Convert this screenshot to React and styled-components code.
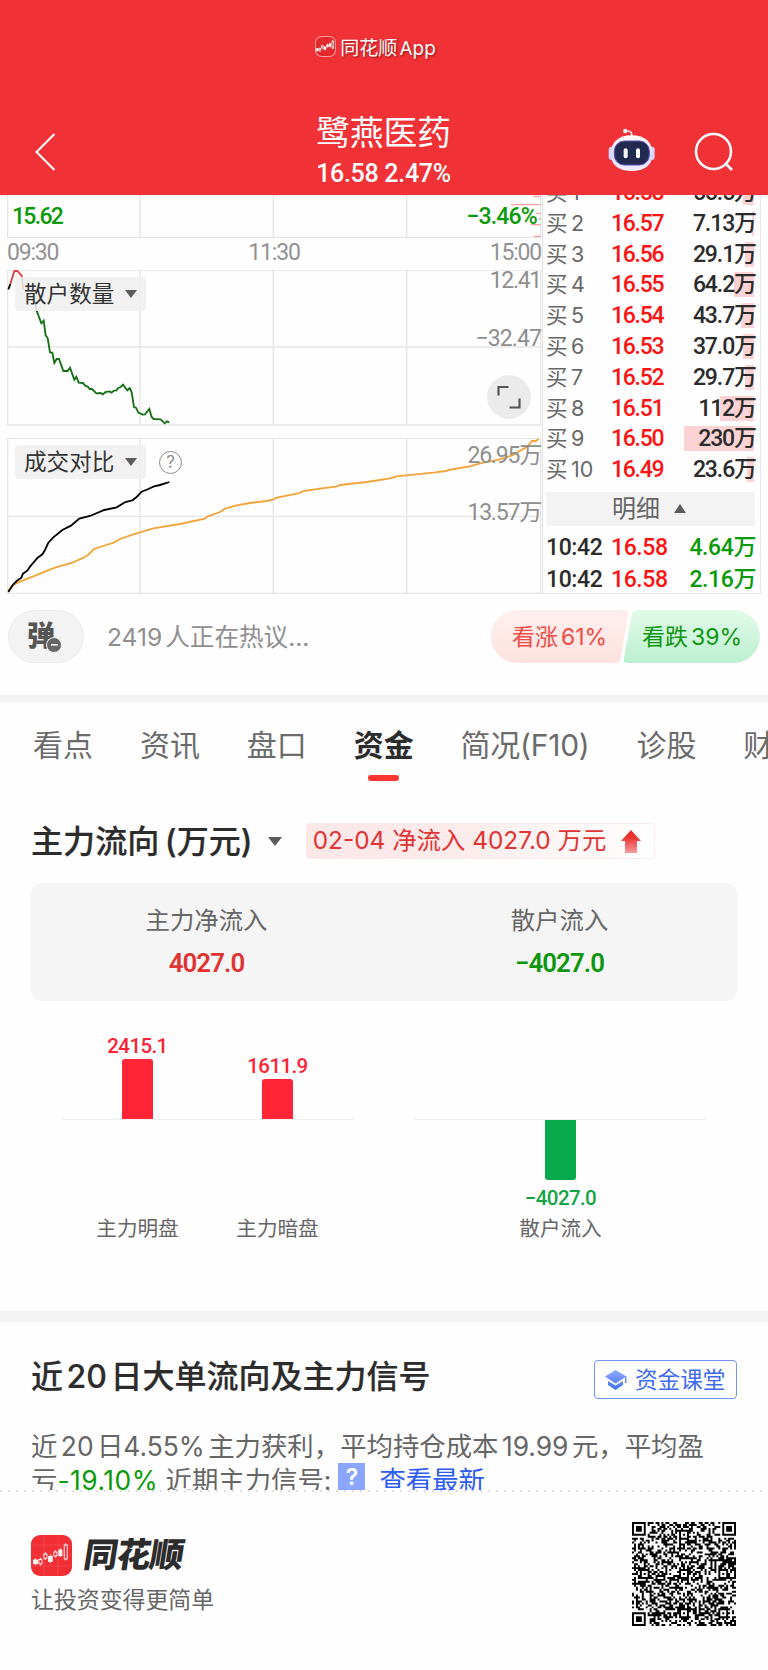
import React from "react";
import styled, { createGlobalStyle } from "styled-components";

const GlobalStyle = createGlobalStyle`
  * {
    box-sizing: border-box;
  }
  body {
    margin: 0;
    background: #fefefe;
    font-family: Inter, "Noto Sans CJK SC", sans-serif;
    color: #303030;
  }
  svg {
    display: block;
  }
`;

const din = `Roboto, "Noto Sans CJK SC", sans-serif`;

const Page = styled.div`
  width: 768px;
  height: 1670px;
  overflow: hidden;
  display: flex;
  flex-direction: column;
  white-space: nowrap;
`;

/* ---------- header ---------- */

const Header = styled.header`
  height: 195px;
  flex: none;
  background: #f03136;
  color: #fff;
`;

const Brand = styled.div`
  height: 97px;
  padding: 0 17px 4px 0;
  display: flex;
  align-items: center;
  justify-content: center;
  gap: 4px;
  font-size: 19px;
  word-spacing: -3px;
  text-shadow: 1px 1px 2px rgba(90, 0, 0, 0.6);
`;

const NavBar = styled.div`
  height: 98px;
  display: grid;
  grid-template-columns: 1fr 160px 1fr;
  padding: 0 35px 0 34px;
`;

const NavLeft = styled.div`
  padding-top: 35px;
`;

const NavRight = styled.div`
  display: flex;
  justify-content: flex-end;
  gap: 38px;
  padding-top: 31px;
`;

const StockTitle = styled.div`
  display: flex;
  flex-direction: column;
  align-items: center;
`;

const StockName = styled.div`
  height: 58px;
  margin-top: 7px;
  line-height: 58px;
  font-size: 33.8px;
`;

const StockPrice = styled.div`
  font-family: ${din};
  font-weight: 500;
  font-size: 25px;
  line-height: 24px;
  letter-spacing: -0.3px;
`;

/* ---------- quote area ---------- */

const Quote = styled.section`
  flex: none;
  height: 399px;
  display: flex;
  padding-left: 7px;
`;

const Charts = styled.div`
  width: 535px;
  display: flex;
  flex-direction: column;
`;

const ChartBox = styled.div`
  position: relative;
  height: ${(p) => p.$height}px;
`;

const AxisText = styled.span`
  position: absolute;
  top: ${(p) => p.$top}px;
  ${(p) => (p.$left ? `left: ${p.$left}px` : `right: ${p.$right || 1}px`)};
  font-family: ${din};
  font-size: 23px;
  line-height: 24px;
  font-weight: ${(p) => (p.$color ? 500 : 400)};
  letter-spacing: ${(p) => p.$spacing || -1}px;
  color: ${(p) => p.$color || "#8e8e8e"};
`;

const TimeRow = styled.div`
  height: 32px;
  display: flex;
  justify-content: space-between;
  padding-right: 1px;
  font-family: ${din};
  font-size: 23px;
  line-height: 30px;
  letter-spacing: -1.2px;
  color: #929292;
`;

const Picker = styled.div`
  position: absolute;
  left: 8px;
  top: ${(p) => p.$top}px;
  width: 131px;
  height: 34px;
  padding: 0 0 0 9px;
  display: flex;
  align-items: center;
  gap: 11px;
  border-radius: 4px;
  background: rgba(238, 238, 238, 0.85);
  font-size: 22.6px;
  line-height: 34px;
  color: #333;
`;

const Caret = styled.i`
  width: 0;
  height: 0;
  border: ${(p) => p.$w || 6}px solid transparent;
  border-bottom-width: 0;
  border-top: ${(p) => p.$h || 8.5}px solid #5c5c5c;
  transform: ${(p) => (p.$up ? "rotate(180deg)" : "none")};
`;

const Help = styled.div`
  position: absolute;
  left: 152px;
  top: 13px;
  width: 23px;
  height: 23px;
  border: 1.6px solid #8d8d8d;
  border-radius: 50%;
  font-size: 17px;
  line-height: 20px;
  text-align: center;
  color: #8a8a8a;
`;

const Expand = styled.div`
  position: absolute;
  left: 480px;
  top: 105px;
  width: 44px;
  height: 44px;
  padding: 10px;
  border-radius: 50%;
  background: #ebebeb;
`;

const OrderBook = styled.div`
  width: 219px;
  overflow: hidden;
  border-right: 1.5px solid #e8e8e8;
  border-left: 1.5px solid #e3e3e3;
  border-bottom: 1.5px solid #e8e8e8;
  padding: 0 4px 0 3px;
`;

const BookList = styled.div`
  margin-top: -18px;
`;

const BookRow = styled.div`
  position: relative;
  height: 30.8px;
  display: grid;
  grid-template-columns: 65px 60px 1fr;
  font-family: ${din};
  font-size: 23px;
  line-height: 31px;
  font-weight: 500;
  letter-spacing: -1.3px;
`;

const VolumeBar = styled.i`
  position: absolute;
  right: 2px;
  top: 3px;
  height: 25px;
  width: ${(p) => p.$width}px;
  background: #fbd3d5;
`;

const Level = styled.span`
  font-family: Inter, "Noto Sans CJK SC", sans-serif;
  font-weight: 400;
  font-size: 21.5px;
  letter-spacing: 0;
  word-spacing: -2.5px;
  color: #686868;
`;

const Price = styled.span`
  color: #fb1414;
`;

const Volume = styled.span`
  position: relative;
  text-align: right;
  letter-spacing: -1.1px;
  color: ${(p) => p.$color || "#2b2b2b"};
`;

const DetailBar = styled.div`
  height: 34px;
  width: 209px;
  margin: 7px 0 4px;
  padding-right: 3px;
  display: flex;
  align-items: center;
  justify-content: center;
  gap: 14px;
  background: #f3f3f3;
  font-size: 24px;
  line-height: 32px;
  color: #666;
`;

const TradeRow = styled(BookRow)`
  height: 32.3px;
  line-height: 35px;
  letter-spacing: -0.4px;
  color: #2b2b2b;

  ${Volume} {
    letter-spacing: -0.4px;
  }
`;

/* ---------- discussion ---------- */

const Discussion = styled.section`
  flex: none;
  height: 101px;
  display: flex;
  align-items: flex-start;
  padding: 16px 8px 0;
`;

const DanmuPill = styled.div`
  width: 76px;
  height: 53px;
  position: relative;
  border: 1.5px solid #ebebeb;
  border-radius: 27px;
  background: #f3f3f3;
  padding-left: 18px;
  font-size: 28px;
  line-height: 50px;
  font-weight: 900;
  color: #555;
`;

const MinusBadge = styled.i`
  position: absolute;
  left: 37px;
  top: 26px;
  width: 16px;
  height: 16px;
  border: 1.5px solid #f3f3f3;
  border-radius: 50%;
  background: linear-gradient(#fff, #fff) center / 7px 1.6px no-repeat, #666;
`;

const Talking = styled.div`
  flex: 1;
  padding-left: 23px;
  font-size: 24.6px;
  line-height: 55px;
  word-spacing: -4px;
  color: #8f8f8f;
`;

const Vote = styled.div`
  position: relative;
  width: 269px;
  height: 53px;
  display: flex;
`;

const VoteShape = styled.svg`
  position: absolute;
  inset: 0;
`;

const VoteText = styled.span`
  position: relative;
  padding-left: 21px;
  width: ${(p) => p.$width}px;
  font-size: 23px;
  line-height: 54px;
  word-spacing: -3.5px;
  color: ${(p) => p.$color};
`;

const Divider = styled.div`
  flex: none;
  height: ${(p) => p.$height}px;
  background: #f3f3f3;
`;

/* ---------- tabs ---------- */

const Tabs = styled.nav`
  flex: none;
  height: 78px;
  display: flex;
  gap: 46.9px;
  padding-left: 33px;
  overflow: hidden;
`;

const Tab = styled.div`
  flex: none;
  display: flex;
  flex-direction: column;
  align-items: center;
  font-size: 30px;
  line-height: 84px;
  color: ${(p) => (p.$active ? "#2c2c2c" : "#6b6b6b")};
  font-weight: ${(p) => (p.$active ? 700 : 400)};
  letter-spacing: ${(p) => p.$spacing || 0}px;

  &::after {
    content: "";
    margin-top: -12px;
    width: 31px;
    height: 6px;
    flex: none;
    border-radius: 3px;
    background: ${(p) => (p.$active ? "#fb352f" : "transparent")};
  }
`;

/* ---------- capital flow ---------- */

const Flow = styled.section`
  flex: none;
  height: 530px;
  padding: 42px 31px 0;
`;

const FlowHead = styled.div`
  display: flex;
  align-items: center;
  height: 36px;
`;

const FlowTitle = styled.h2`
  margin: -4px 15px 0 0;
  font-size: 32.1px;
  font-weight: 500;
  -webkit-text-stroke: 0.2px #2c2c2c;
  word-spacing: -3px;
  color: #2c2c2c;
`;

const FlowBadge = styled.div`
  margin-left: 24px;
  width: 349px;
  height: 36px;
  display: flex;
  align-items: center;
  padding-left: 6px;
  gap: 15px;
  border: 1px solid #fdeaea;
  border-radius: 3px;
  background: linear-gradient(90deg, #fde8e8, #fdeaea 40%, #fff);
  font-size: 24.4px;
  color: #e03333;
`;

const BadgeText = styled.span`
  margin-top: -5px;
`;

const Summary = styled.div`
  margin-top: 24px;
  height: 118px;
  display: grid;
  grid-template-columns: 1fr 1fr;
  border-radius: 10px;
  background: #f5f5f5;
`;

const SummaryCell = styled.div`
  text-align: center;
  padding: 19px 2px 0 0;
  font-size: 24.4px;
  line-height: 36px;
  color: #666;
`;

const SummaryValue = styled.div`
  margin-top: 8px;
  font-family: ${din};
  font-size: 25.8px;
  line-height: 34px;
  letter-spacing: -0.9px;
  font-weight: 600;
  color: ${(p) => p.$color};
`;

const BarArea = styled.div`
  display: flex;
  justify-content: space-between;
  height: 230px;
  padding: 0 31px;
  margin-top: 16px;
`;

const BarPanel = styled.div`
  width: 292px;
  display: flex;
  justify-content: center;
  gap: 49px;
  height: 103px;
  padding: ${(p) => (p.$right ? "0 0 0 1px" : "0 1px 0 0")};
  border-bottom: 1.5px solid #f1f1f1;
`;

const BarColumn = styled.div`
  width: 91px;
  height: 231px;
  display: grid;
  grid-template-rows: 102px 93px 34px;
  row-gap: 1px;
  justify-items: center;
  color: ${(p) => (p.$down ? "#13a545" : "#fb2436")};
`;

const BarHalf = styled.div`
  display: flex;
  flex-direction: column;
  align-items: center;
  justify-content: ${(p) => (p.$down ? "flex-start" : "flex-end")};
`;

const BarValue = styled.span`
  font-family: ${din};
  font-size: 20.5px;
  font-weight: 500;
  line-height: 26px;
  letter-spacing: -0.6px;
  margin: ${(p) => (p.$down ? "5px 0 0" : "0")};
`;

const Bar = styled.i`
  flex: none;
  width: 31px;
  background: ${(p) => (p.$down ? "#06a94b" : "#ff2436")};
  border-radius: ${(p) => (p.$down ? "0 0 3px 3px" : "3px 3px 0 0")};
`;

const BarLabel = styled.span`
  font-size: 20.6px;
  line-height: 30px;
  color: #666;
`;

/* ---------- signals ---------- */

const Signals = styled.section`
  flex: none;
  height: 168px;
  padding: 38px 31px 0;
  overflow: hidden;
`;

const SignalHead = styled.div`
  height: 39px;
  display: flex;
  justify-content: space-between;
`;

const SignalTitle = styled.h2`
  margin: -4px 0 0;
  font-size: 32px;
  line-height: 42px;
  font-weight: 500;
  -webkit-text-stroke: 0.2px #2c2c2c;
  word-spacing: -5px;
  color: #2c2c2c;
`;

const ClassButton = styled.div`
  width: 143px;
  height: 39px;
  display: flex;
  align-items: center;
  gap: 7px;
  padding-left: 9px;
  border: 1.5px solid #6f92fb;
  border-radius: 4px;
  font-size: 22.6px;
  line-height: 34px;
  color: #3f69f0;
`;

const SignalText = styled.p`
  margin: 30px 0 0;
  font-size: 26.4px;
  line-height: 34px;
  word-spacing: -4px;
  color: #666;
`;

const Loss = styled.span`
  margin-right: 4px;
  letter-spacing: 0.5px;
  color: #0a9a0a;
`;

const Latest = styled.span`
  margin-left: 14px;
  color: #2d5cf0;
`;

const Question = styled.span`
  display: inline-block;
  width: 27px;
  height: 28px;
  margin-left: 7px;
  vertical-align: top;
  background: #8aa6ff;
  color: #fff;
  font-size: 23px;
  font-weight: 600;
  line-height: 28px;
  text-align: center;
`;

/* ---------- footer ---------- */

const Footer = styled.footer`
  flex: 1;
  display: flex;
  justify-content: space-between;
  padding: 32px 32px 0 31px;
  background: repeating-linear-gradient(90deg, #dedede 0 2px, transparent 2px 8px) top / 100% 2px no-repeat;
`;

const LogoRow = styled.div`
  display: flex;
  gap: 12px;
  padding-top: 13px;
`;

const LogoText = styled.span`
  font-size: 34px;
  line-height: 39px;
  font-weight: 900;
  letter-spacing: -1px;
  transform: skewX(-9deg);
  color: #2c2c2c;
`;

const Slogan = styled.div`
  margin-top: 7px;
  font-size: 22.9px;
  line-height: 34px;
  color: #666;
`;

const rows = [
  ["1", "16.58", "55.5万", 11],
  ["2", "16.57", "7.13万", 2],
  ["3", "16.56", "29.1万", 9],
  ["4", "16.55", "64.2万", 20],
  ["5", "16.54", "43.7万", 13.5],
  ["6", "16.53", "37.0万", 11.5],
  ["7", "16.52", "29.7万", 9],
  ["8", "16.51", "112万", 34],
  ["9", "16.50", "230万", 70],
  ["10", "16.49", "23.6万", 7],
];

const trades = [
  ["10:42", "16.58", "4.64万"],
  ["10:42", "16.58", "2.16万"],
];

const tabs = ["看点", "资讯", "盘口", "资金", "简况(F10)", "诊股", "财务"];

const retail =
  "100,325 106,340 110,362 124,400 131,392 137,436 143,444 150,487 157,488 163,519 170,507 177,507 190,543 203,543 210,533 223,569 229,560 236,578 249,579 256,588 263,590 269,597 276,597 289,610 302,609 309,613 316,606 328,604 335,608 342,602 349,601 355,594 362,591 369,584 382,601 389,594 395,607 402,651 408,653 415,668 428,674 435,673 448,657 455,681 461,687 482,688 494,700 501,694 508,697";

const today =
  "25,516 38,495 50,483 64,473 69,461 82,452 90,440 113,413 127,403 135,390 145,368 160,352 187,330 213,317 238,296 270,288 313,270 350,262 376,246 397,241 410,231 425,215 445,207 462,199 480,195 500,189 508,186";

const yesterday =
  "25,512 40,495 60,485 100,469 150,449 170,441 215,429 250,413 265,404 282,387 310,378 343,367 360,357 400,343 430,334 460,325 540,312 615,296 622,290 660,276 675,266 710,256 750,249 800,243 815,240 830,233 895,220 912,213 960,206 1012,199 1020,195 1100,186 1170,175 1190,169 1240,164 1300,158 1338,153 1345,150 1410,139 1440,130 1500,118 1540,105 1555,95 1582,80 1596,63 1607,63 1616,57";

function Grid({ top, bottom, mid }) {
  return (
    <g fill="none" stroke="#e6e6e6" strokeWidth="4">
      <path d={`M23 ${top}V${bottom}H1622V${top}z`} />
      <path d={`M420 ${top}V${bottom}M820 ${top}V${bottom}M1220 ${top}V${bottom}`} />
      {mid && <path d={`M23 ${mid}H1622`} />}
    </g>
  );
}

function QrCode() {
  const n = 53;
  let seed = 20240204;
  const finder = (x, y) => {
    const d = Math.max(Math.abs(x - 3), Math.abs(y - 3));
    return d > 3 ? 0 : d !== 2;
  };
  let d = "";
  for (let y = 0; y < n; y++) {
    for (let x = 0; x < n; x++) {
      seed = (seed * 1103515245 + 12345) % 2147483648;
      let on = seed / 2147483648 > 0.5;
      [
        [6, 26],
        [26, 6],
        [26, 26],
        [46, 26],
        [26, 46],
        [46, 46],
      ].forEach(([cx, cy]) => {
        const r = Math.max(Math.abs(x - cx), Math.abs(y - cy));
        if (r < 3) on = r !== 1;
      });
      if (x < 8 && y < 8) on = finder(x, y);
      if (x > n - 9 && y < 8) on = finder(x - n + 7, y);
      if (x < 8 && y > n - 9) on = finder(x, y - n + 7);
      if (on) d += `M${x} ${y}h1v1h-1z`;
    }
  }
  return (
    <svg width="104" height="104" viewBox={`0 0 ${n} ${n}`}>
      <path d={d} fill="#000" />
    </svg>
  );
}

const candles = [
  [4, 25, 4, 3.6, true],
  [9, 24.5, 3, 4.4, false],
  [14, 19, 3, 4.4, false],
  [19, 21.5, 3.6, 5, true],
  [24, 17, 3, 4, false],
  [29, 15, 3, 5.5, true],
  [34.3, 10, 3, 14, false],
];

function AppLogo({ size, outline }) {
  return (
    <svg width={size} height={size} viewBox="0 0 41 41">
      <rect
        x={outline ? 1 : 0}
        y={outline ? 1 : 0}
        width={outline ? 39 : 41}
        height={outline ? 39 : 41}
        rx={outline ? 12 : 9}
        fill={outline ? "#e2262b" : "#f22e35"}
        stroke={outline ? "#ff9a9d" : "none"}
        strokeWidth="2"
      />
      <path d="M0 10h41M0 20h41M0 31h41M13 0v41M27 0v41" stroke="#fff" strokeOpacity=".12" strokeWidth=".8" />
      {candles.map(([x, y, w, h, solid]) => (
        <g key={x} stroke="#fff" strokeWidth={outline ? 1.4 : 0.9} fill={solid ? "#fff" : "none"}>
          <rect x={x - w / 2 + 0.4} y={y} width={w} height={h} />
          <path d={`M${x + 0.4} ${y - 1.8}v1.8M${x + 0.4} ${y + h}v1.6`} />
        </g>
      ))}
    </svg>
  );
}

function Robot() {
  return (
    <svg width="47" height="44" viewBox="25 12 141 132">
      <defs>
        <linearGradient id="shell" x1="0" y1="0" x2="0" y2="1">
          <stop offset="0" stopColor="#fff" />
          <stop offset=".6" stopColor="#d9d8fb" />
          <stop offset="1" stopColor="#f5efff" />
        </linearGradient>
      </defs>
      <path d="M96 38V30Q96 22 84 21" fill="none" stroke="#f1eaf7" strokeWidth="5" />
      <circle cx="77" cy="21" r="7" fill="#fbeef2" />
      <rect x="27" y="68" width="18" height="40" rx="9" fill="#cfd3fb" />
      <rect x="147" y="68" width="18" height="40" rx="9" fill="#cfd3fb" />
      <path
        d="M96 34C136 34 159 56 159 90C159 124 134 141 96 141C58 141 33 124 33 90C33 56 56 34 96 34z"
        fill="url(#shell)"
      />
      <rect x="44" y="51" width="105" height="72" rx="30" fill="#232a4f" stroke="#5d4fb8" strokeWidth="3" />
      <rect x="72" y="73" width="12" height="30" rx="6" fill="#fff" />
      <rect x="109" y="73" width="12" height="30" rx="6" fill="#fff" />
    </svg>
  );
}

function BarItem({ value, label, height, down }) {
  return (
    <BarColumn $down={down}>
      <BarHalf>
        {!down && <BarValue>{value}</BarValue>}
        {!down && <Bar style={{ height }} />}
      </BarHalf>
      <BarHalf $down>
        {down && <Bar $down style={{ height }} />}
        {down && <BarValue $down>{value}</BarValue>}
      </BarHalf>
      <BarLabel>{label}</BarLabel>
    </BarColumn>
  );
}

function TopHeader() {
  return (
    <Header>
      <Brand>
        <AppLogo size={21} outline />
        <span>同花顺 App</span>
      </Brand>
      <NavBar>
        <NavLeft>
          <svg width="24" height="40" viewBox="0 0 24 40">
            <path d="M20.500 2L2.500 20l18 18" fill="none" stroke="#fff" strokeWidth="2" />
          </svg>
        </NavLeft>
        <StockTitle>
          <StockName>鹭燕医药</StockName>
          <StockPrice>16.58 2.47%</StockPrice>
        </StockTitle>
        <NavRight>
          <Robot />
          <svg width="40" height="46" viewBox="0 0 40 46">
            <circle cx="20.5" cy="23.5" r="17.5" fill="none" stroke="#fff" strokeWidth="2.5" />
            <path d="M32 35l7 7" stroke="#fff" strokeWidth="2.7" />
          </svg>
        </NavRight>
      </NavBar>
    </Header>
  );
}

function QuoteArea() {
  return (
    <Quote>
      <Charts>
        <ChartBox $height={43}>
          <svg width="535" height="43" viewBox="21 15 1605 129">
            <Grid top={-40} bottom={142} />
            <path
              d="M1600 19H1622M1533 44H1622M1608 70H1622M1616 87H1622M1593 104H1622M1602 139H1622"
              stroke="#f8a0a3"
              strokeWidth="4"
            />
          </svg>
          <AxisText $top={10} $left={5} $spacing={-1.7} $color="#0a9a0a">15.62</AxisText>
          <AxisText $top={10} $right={5} $spacing={-0.8} $color="#0a9a0a">−3.46%</AxisText>
        </ChartBox>
        <TimeRow>
          <span>09:30</span>
          <span>11:30</span>
          <span>15:00</span>
        </TimeRow>
        <ChartBox $height={156}>
          <svg width="535" height="156" viewBox="21 240 1605 468">
            <Grid top={240} bottom={705} mid={471} />
            <g fill="none" strokeWidth="5.5">
              <polyline points="25,298 31,282" stroke="#000" />
              <polyline points="31,282 43,243 52,243 65,257 70,298" stroke="#e63c40" />
              <polyline points={retail} stroke="#157015" />
            </g>
          </svg>
          <Picker $top={7}>
            散户数量 <Caret />
          </Picker>
          <AxisText $top={-1} $spacing={-1.3}>12.41</AxisText>
          <AxisText $top={57} $spacing={-0.9}>−32.47</AxisText>
          <Expand>
            <svg width="24" height="24" viewBox="0 0 24 24" fill="none" stroke="#555" strokeWidth="2.2">
              <path d="M1.5 10.5V2h10M22.5 13.5v9h-10" />
            </svg>
          </Expand>
        </ChartBox>
        <ChartBox $height={12} />
        <ChartBox $height={156}>
          <AxisText $top={6} $spacing={-1.2}>26.95万</AxisText>
          <AxisText $top={63} $spacing={-1.2}>13.57万</AxisText>
          <svg width="535" height="156" viewBox="21 54 1605 468">
            <Grid top={55} bottom={520} mid={289} />
            <g fill="none" strokeWidth="5.5">
              <polyline points={yesterday} stroke="#f2a33a" />
              <polyline points={today} stroke="#000" />
            </g>
          </svg>
          <Picker $top={7}>
            成交对比 <Caret />
          </Picker>
          <Help>?</Help>
        </ChartBox>
      </Charts>
      <OrderBook>
        <BookList>
          {rows.map(([level, price, volume, width]) => (
            <BookRow key={level}>
              <VolumeBar $width={width} />
              <Level>买 {level}</Level>
              <Price>{price}</Price>
              <Volume>{volume}</Volume>
            </BookRow>
          ))}
        </BookList>
        <DetailBar>
          明细 <Caret $up $w={6.5} $h={9} />
        </DetailBar>
        {trades.map(([time, price, volume], i) => (
          <TradeRow key={i}>
            <span>{time}</span>
            <Price>{price}</Price>
            <Volume $color="#0a9a0a">{volume}</Volume>
          </TradeRow>
        ))}
      </OrderBook>
    </Quote>
  );
}

function DiscussionBar() {
  return (
    <Discussion>
      <DanmuPill>
        弹
        <MinusBadge />
      </DanmuPill>
      <Talking>2419 人正在热议...</Talking>
      <Vote>
        <VoteShape width="269" height="53" viewBox="0 0 269 53">
          <defs>
            <linearGradient id="up" x1="0" y1="0" x2="0" y2="1">
              <stop offset="0" stopColor="#fff0ef" />
              <stop offset="1" stopColor="#fde2df" />
            </linearGradient>
            <linearGradient id="down" x1="0" y1="0" x2="0" y2="1">
              <stop offset="0" stopColor="#e2faea" />
              <stop offset="1" stopColor="#bdf0d0" />
            </linearGradient>
          </defs>
          <path d="M26.5 0H134q4 0 3.3 4L129.5 49q-.8 4-4.5 4H26.5a26.5 26.5 0 010-53z" fill="url(#up)" />
          <path d="M146 0H242.5a26.5 26.5 0 010 53H136q-4 0-3.3-4L141 4q.8-4 5-4z" fill="url(#down)" />
        </VoteShape>
        <VoteText $width={130} $color="#ee4c45">看涨 61%</VoteText>
        <VoteText $width={139} $color="#0f960f">看跌 39%</VoteText>
      </Vote>
    </Discussion>
  );
}

function CapitalFlow() {
  return (
    <Flow>
      <FlowHead>
        <FlowTitle>主力流向 (万元)</FlowTitle>
        <Caret $w={7} $h={9} />
        <FlowBadge>
          <BadgeText>02-04 净流入 4027.0 万元</BadgeText>
          <svg width="20" height="23" viewBox="0 0 20 23">
            <defs>
              <linearGradient id="arrow" x1="0" y1="0" x2="0" y2="1">
                <stop offset=".3" stopColor="#e8302f" />
                <stop offset="1" stopColor="#f79b9b" />
              </linearGradient>
            </defs>
            <path d="M10 0L20 11H16V23H4V11H0z" fill="url(#arrow)" />
          </svg>
        </FlowBadge>
      </FlowHead>
      <Summary>
        <SummaryCell>
          主力净流入
          <SummaryValue $color="#e03333">4027.0</SummaryValue>
        </SummaryCell>
        <SummaryCell>
          散户流入
          <SummaryValue $color="#0f960f">−4027.0</SummaryValue>
        </SummaryCell>
      </Summary>
      <BarArea>
        <BarPanel>
          <BarItem value="2415.1" label="主力明盘" height={60} />
          <BarItem value="1611.9" label="主力暗盘" height={40} />
        </BarPanel>
        <BarPanel $right>
          <BarItem value="−4027.0" label="散户流入" height={60} down />
        </BarPanel>
      </BarArea>
    </Flow>
  );
}

function SignalSection() {
  return (
    <Signals>
      <SignalHead>
        <SignalTitle>近 20 日大单流向及主力信号</SignalTitle>
        <ClassButton>
          <svg width="24" height="22" viewBox="0 0 24 22">
            <defs>
              <linearGradient id="cap" x1="0" y1="0" x2="0" y2="1">
                <stop offset="0" stopColor="#8eaaff" />
                <stop offset="1" stopColor="#4470ee" />
              </linearGradient>
            </defs>
            <path
              d="M11.5 1L22.5 7.5V14h-1.5V8.5L11.5 14.5L1 7.5zM4 12l7.5 4.5L19 12v4l-7.5 5L4 16z"
              fill="url(#cap)"
            />
          </svg>
          资金课堂
        </ClassButton>
      </SignalHead>
      <SignalText>
        近 20 日4.55% 主力获利，平均持仓成本 19.99 元，平均盈
        <br />亏<Loss>-19.10%</Loss> 近期主力信号:
        <Question>?</Question>
        <Latest>查看最新</Latest>
      </SignalText>
    </Signals>
  );
}

function App() {
  return (
    <Page>
      <GlobalStyle />
      <TopHeader />
      <QuoteArea />
      <DiscussionBar />
      <Divider $height={8} />
      <Tabs>
        {tabs.map((t) => (
          <Tab key={t} $active={t === "资金"} $spacing={t.length > 2 ? -0.25 : 0}>
            {t}
          </Tab>
        ))}
      </Tabs>
      <CapitalFlow />
      <Divider $height={11} />
      <SignalSection />
      <Footer>
        <div>
          <LogoRow>
            <AppLogo size={41} />
            <LogoText>同花顺</LogoText>
          </LogoRow>
          <Slogan>让投资变得更简单</Slogan>
        </div>
        <QrCode />
      </Footer>
    </Page>
  );
}

export default App;
